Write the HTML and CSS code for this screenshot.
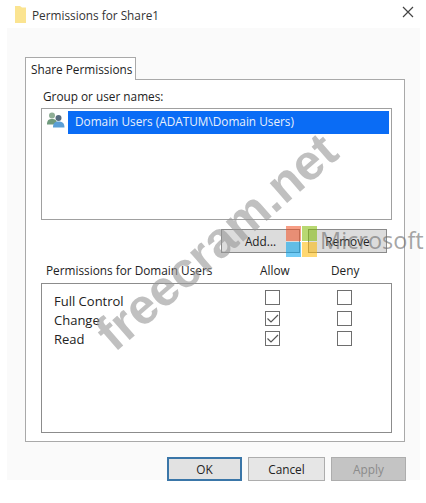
FILE: index.html
```html
<!DOCTYPE html>
<html lang="en">
<head>
    <meta charset="UTF-8">
    <meta name="viewport" content="width=device-width, initial-scale=1.0">
    <title>Permissions for Share1</title>
    <link rel="stylesheet" href="styles.css">
</head>
<body>
    <header class="titlebar">
        <svg class="folder" width="11" height="17" viewBox="0 0 11 17">
            <path d="M0 1.5 L0 0 L5 0 L7 1.5 L11 1.5 L11 17 L0 17 Z" fill="#fbe491"/>
        </svg>
        <span class="title">Permissions for Share1</span>
        <svg class="close" width="12" height="12" viewBox="0 0 12 12">
            <path d="M1 1 L11 11 M11 1 L1 11" stroke="#444" stroke-width="1.2" fill="none"/>
        </svg>
    </header>

    <div class="client">
        <div class="tab">Share Permissions</div>
        <section class="panel">
            <div class="group-label">Group or user names:</div>
            <div class="listbox">
                <div class="list-row">
                    <svg class="users" width="23" height="20" viewBox="0 0 23 20">
                        <circle cx="7" cy="4.5" r="3" fill="#8fae96"/>
                        <path d="M2 13.5 C2 9 4 8 7 8 C10 8 12 9 12 13.5 Z" fill="#6f9a7c"/>
                        <circle cx="13.5" cy="7" r="3" fill="#566c80"/>
                        <path d="M8 16.5 C8 12 10 10.5 13.5 10.5 C17 10.5 19.5 12 19.5 16.5 Z" fill="#5b9fd6"/>
                    </svg>
                    <div class="selection">Domain Users (ADATUM\Domain Users)</div>
                </div>
            </div>
            <div class="list-actions">
                <button class="btn btn-action" type="button">Add...</button>
                <button class="btn btn-action" type="button">Remove</button>
            </div>
            <div class="perm-head">
                <span class="perm-title">Permissions for Domain Users</span>
                <span class="col col-allow">Allow</span>
                <span class="col col-deny">Deny</span>
            </div>
            <div class="perm-box">
                <div class="perm-names">
                    <div>Full Control</div>
                    <div>Change</div>
                    <div>Read</div>
                </div>
                <div class="perm-checks">
                    <span class="check"></span><span class="check"></span>
                    <span class="check"><svg width="13" height="13" viewBox="0 0 13 13"><path d="M1.5 6.5 L5 10 L12 3" stroke="#555" stroke-width="1.2" fill="none"/></svg></span><span class="check"></span>
                    <span class="check"><svg width="13" height="13" viewBox="0 0 13 13"><path d="M1.5 6.5 L5 10 L12 3" stroke="#555" stroke-width="1.2" fill="none"/></svg></span><span class="check"></span>
                </div>
            </div>
        </section>
        <footer class="dialog-buttons">
            <button class="btn btn-ok" type="button">OK</button>
            <button class="btn btn-cancel" type="button">Cancel</button>
            <button class="btn btn-apply" type="button">Apply</button>
        </footer>
    </div>

    <!-- watermark sits over the dialog -->
    <div class="watermark">freecram.net</div>
    <div class="ms-logo">
        <span class="sq sq-red"></span><span class="sq sq-green"></span>
        <span class="sq sq-blue"></span><span class="sq sq-yellow"></span>
    </div>
    <div class="ms-text">Microsoft</div>
</body>
</html>
```

FILE: styles.css
```css
html, body {
    height: 100%;
}

body {
    font-family: "Open Sans", "Noto Sans", sans-serif;
    font-size: 11.8px;
    color: #222;
    margin: 0;
    padding: 0;
    width: 426px;
    height: 503px;
    position: relative;
    overflow: hidden;
    background: #fff;
}

.titlebar {
    display: flex;
    align-items: center;
    height: 28px;
    padding: 0 12px 0 15px;
}

.title {
    margin-left: 6px;
    margin-top: 1px;
    color: #333;
}

.close {
    margin-left: auto;
    margin-top: -4px;
}

.client {
    margin-left: 7px;
    width: 413px;
    height: 452px;
    box-sizing: border-box;
    background: #fafafa;
    padding-top: 29px;
    padding-left: 18px;
}

.tab {
    position: relative;
    z-index: 1;
    box-sizing: border-box;
    width: 111px;
    height: 23px;
    line-height: 22px;
    padding-left: 5px;
    white-space: nowrap;
    background: #fff;
    border: 1px solid #a9a9a9;
    border-bottom: none;
}

.panel {
    box-sizing: border-box;
    width: 380px;
    height: 363px;
    margin-top: -1px;
    padding: 8px 12px 0 15px;
    background: #fff;
    border: 1px solid #a9a9a9;
}

.group-label {
    padding-left: 2px;
    height: 20px;
    line-height: 16px;
}

.listbox {
    box-sizing: border-box;
    width: 351px;
    height: 112px;
    padding: 2px 2px 0 3px;
    border: 1px solid #a0a0a0;
    background: #fff;
}

.list-row {
    display: flex;
}

.users {
    flex: none;
}

.selection {
    flex: 1;
    height: 23px;
    line-height: 21px;
    padding-left: 7px;
    background: #0a6cf5;
    color: #e8f0fb;
}

.list-actions {
    display: flex;
    justify-content: flex-end;
    gap: 8px;
    margin-top: 9px;
    width: 346px;
}

.btn {
    box-sizing: border-box;
    font-family: inherit;
    font-size: 11.8px;
    padding: 0;
    color: #222;
    border: 1px solid #adadad;
    background: #e2e2e2;
}

.btn-action {
    width: 79px;
    height: 24px;
    border-color: #8a8a8a;
    background: #dcdcdc;
}

.perm-head {
    display: flex;
    box-sizing: border-box;
    height: 29px;
    align-items: flex-end;
    line-height: 18px;
    padding-bottom: 3px;
}

.perm-title {
    width: 213px;
    padding-left: 5px;
    box-sizing: border-box;
}

.col-allow {
    width: 77px;
    padding-left: 6px;
    box-sizing: border-box;
}

.perm-box {
    box-sizing: border-box;
    display: flex;
    width: 351px;
    height: 150px;
    margin-top: 1px;
    padding: 8px 0 0 12px;
    border: 1px solid #8c8c8c;
    background: #fff;
}

.perm-names {
    width: 211px;
    line-height: 19px;
    font-size: 13px;
}

.perm-checks {
    display: grid;
    grid-template-columns: 15px 15px;
    grid-auto-rows: 15px;
    column-gap: 57px;
    row-gap: 5.5px;
    margin-top: -2px;
}

.check {
    display: flex;
    align-items: center;
    justify-content: center;
    box-sizing: border-box;
    width: 15px;
    height: 15px;
    border: 1px solid #6e6e6e;
    background: #fff;
}

.dialog-buttons {
    display: flex;
    gap: 6px;
    margin-top: 15px;
    padding-left: 142px;
}

.dialog-buttons .btn {
    height: 24px;
}

.btn-ok {
    width: 75px;
    border: 2px solid #3a76a8;
    background: #e2e2e2;
}

.btn-cancel {
    width: 77px;
    background: #e6e6e6;
}

.btn-apply {
    width: 75px;
    background: #c4c4c4;
    color: #8b8b8b;
}

.watermark {
    position: absolute;
    left: 70px;
    top: 226px;
    width: 272px;
    text-align: center;
    font-family: "Liberation Sans", sans-serif;
    font-weight: bold;
    font-size: 50px;
    line-height: 50px;
    white-space: nowrap;
    color: rgba(150, 150, 150, 0.6);
    transform: rotate(-41deg);
}

.ms-logo {
    position: absolute;
    left: 286px;
    top: 226px;
    display: grid;
    grid-template-columns: 15px 15px;
    grid-auto-rows: 15px;
    gap: 1px;
    opacity: 0.55;
}

.sq-red { background: #f25022; }
.sq-green { background: #7fba00; }
.sq-blue { background: #00a4ef; }
.sq-yellow { background: #ffb900; }

.ms-text {
    position: absolute;
    left: 320px;
    top: 224px;
    font-size: 23.5px;
    line-height: 32px;
    color: rgba(115, 115, 115, 0.65);
}
```
